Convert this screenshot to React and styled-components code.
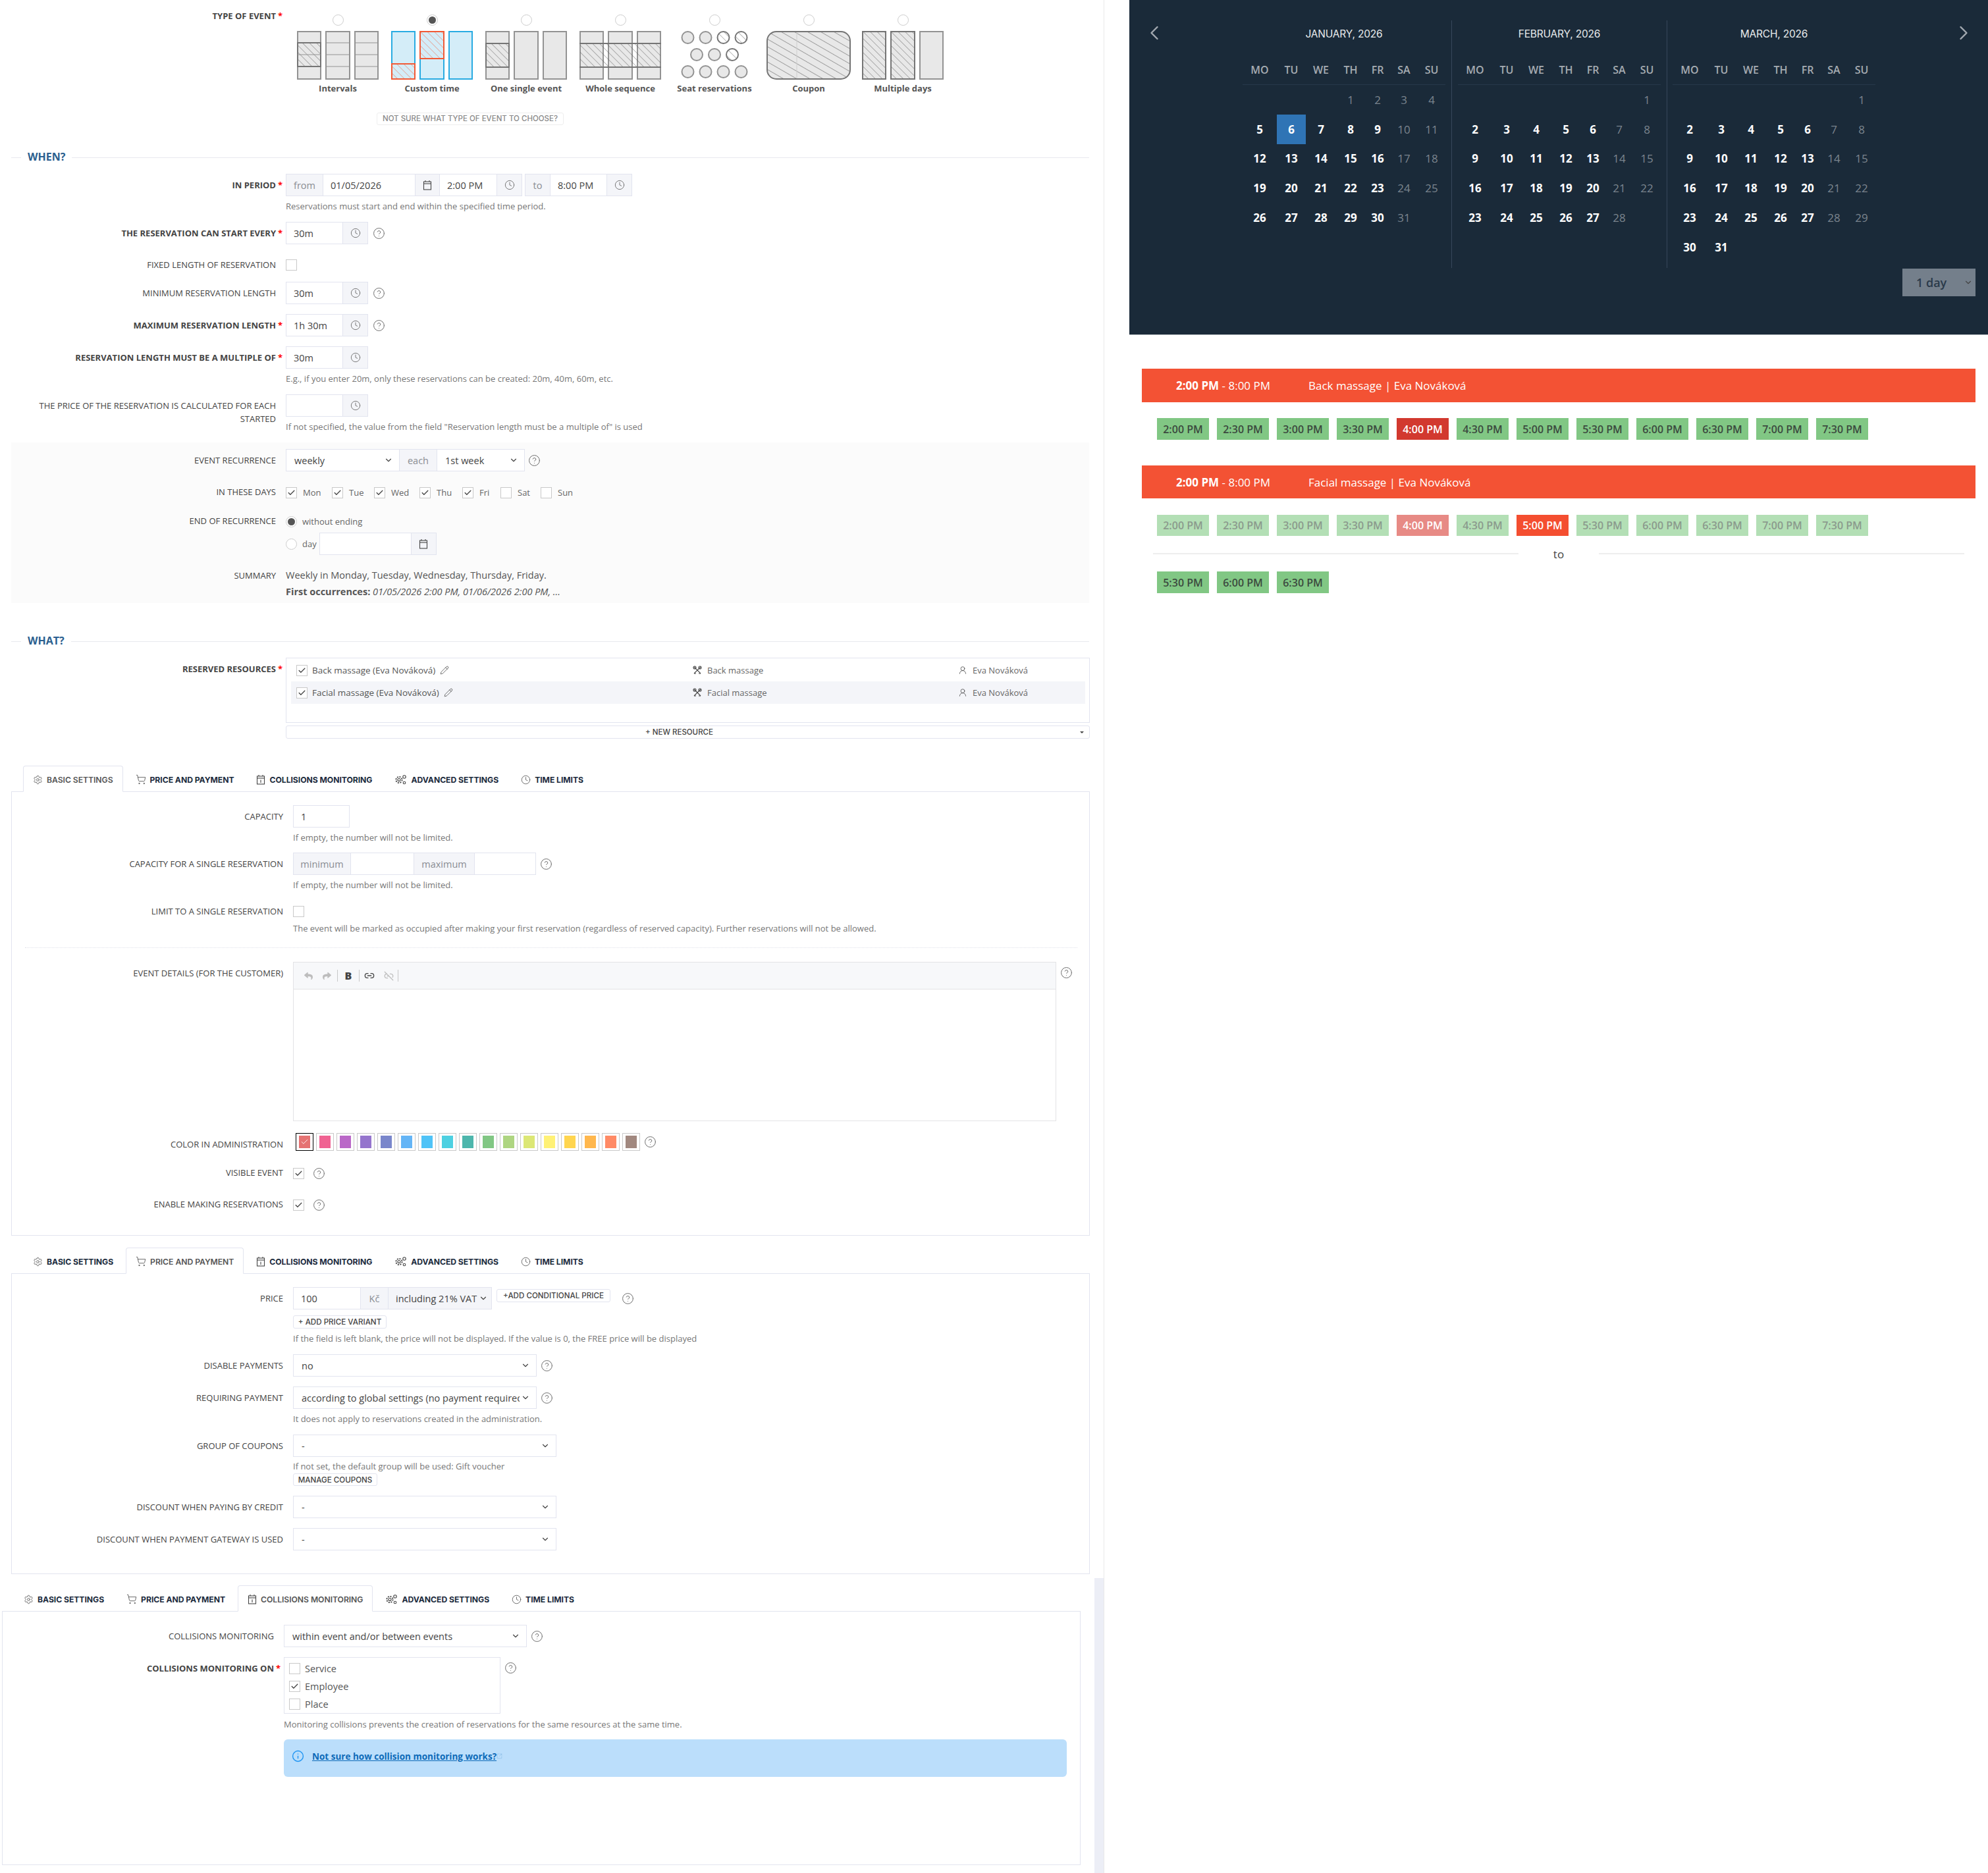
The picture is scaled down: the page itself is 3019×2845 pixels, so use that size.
import React from "react"
import styled, { createGlobalStyle } from "styled-components"
import { Check, ChevronDown, ChevronLeft, ChevronRight, CircleHelp, Clock, Info, Link2, Link2Off, Pencil, Settings, ShoppingCart, SquareArrowOutUpRight, UserRound } from "lucide-react"
import { FaReply, FaShare } from "react-icons/fa"

const Global = createGlobalStyle`
    html, body { margin: 0; padding: 0; background: #fff; }
    body { font-family: "Open Sans", "Liberation Sans", sans-serif; color: #444; }
    * { box-sizing: border-box; }
`

const Page = styled.div`
    display: flex;
    width: 3019px;
    height: 2845px;
    overflow: hidden;
`
const LeftPane = styled.div`
    position: relative;
    width: 1677px;
    flex: none;
    border-right: 1px solid #e9e9e9;
`
const ScrollStrip = styled.div`
    position: absolute;
    right: 0;
    top: 2397px;
    bottom: 0;
    width: 14px;
    background: #eceef6;
`
const RightPane = styled.div`
    flex: 1;
    margin-left: 38px;
    display: flex;
    flex-direction: column;
`

/* ---- event type picker ---- */
const TypeTop = styled.div`
    display: flex;
    padding-top: 22px;
`
const TypeLabel = styled.div`
    width: 419px;
    flex: none;
    margin-top: -8px;
    line-height: 20px;
    font-size: 13px;
    font-weight: 700;
    text-align: right;
    text-transform: uppercase;
`
const TypeStar = styled.div`
    width: 22.5px;
    flex: none;
    margin-top: -8px;
    padding-left: 3px;
    color: #f00;
    font-size: 13px;
    font-weight: 700;
    line-height: 20px;
`
const TypeGrid = styled.div`
    display: flex;
`
const TypeItem = styled.div`
    width: 143px;
    display: flex;
    flex-direction: column;
    align-items: center;
`
const TypeName = styled.div`
    margin-top: 5px;
    font-size: 13px;
    line-height: 16px;
    font-weight: 700;
    color: #555;
`
const NotSure = styled.div`
    width: 284px;
    height: 19px;
    margin: 29px 0 0 572px;
    border: 1px solid #eee;
    border-radius: 3px;
    font-family: "Inter", sans-serif;
    font-size: 11.5px;
    font-weight: 500;
    line-height: 17px;
    text-align: center;
    color: #8a8a8a;
    white-space: nowrap;
`

/* ---- form parts ---- */
const SectionTitle = styled.div`
    display: flex;
    align-items: center;
    height: 20px;
    margin: ${p => p.$mt}px 22px 16px 17px;
    font-size: 16px;
    font-weight: 700;
    line-height: 18px;
    color: #2b5f8f;
    &::before { content: ""; width: 15px; height: 1px; margin-top: 2px; background: #e8e9ee; margin-right: 10px; }
    &::after { content: ""; flex: 1; height: 1px; margin-top: 2px; background: #e8e9ee; margin-left: 10px; }
`
const Row = styled.div`
    display: flex;
    align-items: flex-start;
    margin-top: ${p => p.$mt || 0}px;
`
const Label = styled.div`
    width: ${p => p.$w || 419}px;
    flex: none;
    padding-top: ${p => (p.$pad !== undefined ? p.$pad : p.$tick ? 0 : 7)}px;
    margin-top: ${p => (p.$tick ? -2 : 0)}px;
    margin-bottom: ${p => (p.$tick ? -1 : 0)}px;
    font-size: 13px;
    line-height: 20px;
    font-weight: ${p => (p.$req ? 700 : 400)};
    text-align: right;
    text-transform: uppercase;
    white-space: nowrap;
`
const Star = styled.div`
    width: 15px;
    flex: none;
    padding: ${p => (p.$on ? "7px 0 0 3px" : "0")};
    color: #f00;
    font-size: 13px;
    font-weight: 700;
    line-height: 20px;
`
const Controls = styled.div`
    flex: 1;
    min-width: 0;
`
const Inline = styled.div`
    display: flex;
    align-items: ${p => p.$align || "center"};
    gap: ${p => p.$gap || 0}px;
    margin-top: ${p => p.$mt || 0}px;
`
const Group = styled.div`
    display: inline-flex;
    height: 34px;
    margin-left: ${p => p.$ml || 0}px;
    border: 1px solid #e2e4ef;
    vertical-align: top;
`
const Field = styled.div`
    width: ${p => p.$w}px;
    display: flex;
    align-items: center;
    padding-left: 11px;
    font-size: 14.5px;
    color: #444;
    background: #fff;
`
const Addon = styled.div`
    width: ${p => p.$w}px;
    display: flex;
    align-items: center;
    justify-content: center;
    flex: none;
    font-size: 14.5px;
    color: #8a8d93;
    background: #f4f5f9;
    border-left: ${p => (p.$first ? "none" : "1px solid #e2e4ef")};
    border-right: ${p => (p.$first || p.$both ? "1px solid #e2e4ef" : "none")};
`
const SelectBox = styled.div`
    width: ${p => p.$w}px;
    flex: none;
    display: flex;
    align-items: center;
    justify-content: space-between;
    padding: 0 ${p => (p.$tight ? 5 : 9)}px 0 ${p => (p.$tight ? 11 : 12)}px;
    font-size: 14.5px;
    color: #444;
    white-space: nowrap;
    background: ${p => p.$muted ? "#f4f5f9" : "#fff"};
    border-left: ${p => (p.$edge ? "1px solid #e2e4ef" : "none")};
    span { overflow: hidden; white-space: nowrap; }
    svg { flex: none; margin-left: 2px; }
`
const Help = styled.div`
    margin-top: ${p => (p.$mt === undefined ? 5 : p.$mt)}px;
    font-size: 13px;
    line-height: 20px;
    color: #777;
    white-space: nowrap;
`
const HelpMark = styled(CircleHelp)`
    flex: none;
    margin-left: ${p => p.$ml || 7}px;
    margin-top: ${p => p.$top || 0}px;
    color: #666;
`
const Box = styled.span`
    width: 17px;
    height: 17px;
    flex: none;
    display: flex;
    align-items: center;
    justify-content: center;
    background: #fff;
    border: 1px solid #c9c9c9;
    color: #444;
`
const RadioBox = styled.span`
    width: 17px;
    height: 17px;
    flex: none;
    display: flex;
    align-items: center;
    justify-content: center;
    margin-bottom: ${p => p.$mb || 0}px;
    background: #fff;
    border: 1px solid #cdcdcd;
    border-radius: 50%;
    &::after {
        content: "";
        display: ${p => (p.$on ? "block" : "none")};
        width: 11px;
        height: 11px;
        border-radius: 50%;
        background: #555;
    }
`
const DayChoice = styled.div`
    width: ${p => p.$w}px;
    display: flex;
    align-items: center;
    font-size: 13px;
    color: #666;
    span:last-child { margin-left: 9px; }
`
const RadioText = styled.span`
    margin-left: 8px;
    font-size: 13px;
    color: #666;
`
const Shaded = styled.div`
    margin: 14px 22px 0 17px;
    padding: 10px 0 5px;
    background: #fbfbfb;
`
const Summary = styled.div`
    font-size: 14.5px;
    line-height: 25px;
    font-weight: 400;
    color: #555;
    b { font-weight: 700; }
    i { font-style: italic; }
`

/* ---- resources ---- */
const ResourceBox = styled.div`
    width: 1221px;
    height: 99px;
    padding: 1px 6px 0 7px;
    border: 1px solid #e2e4ef;
`
const ResourceRow = styled.div`
    display: grid;
    grid-template-columns: 602px 403px 1fr;
    align-items: center;
    height: 34px;
    padding-left: 8px;
    font-size: 13.5px;
    color: #555;
    background: ${p => (p.$hl ? "#f4f5f9" : "transparent")};
`
const ResourceName = styled.div`
    display: flex;
    align-items: center;
    gap: 7px;
    svg:last-child { color: #444; }
`
const ResourceMeta = styled.div`
    display: flex;
    align-items: center;
    gap: 8px;
    font-size: 13px;
    color: #666;
    svg { color: #444; }
`
const NewResource = styled.div`
    position: relative;
    width: 1221px;
    height: 20px;
    margin-top: 4px;
    padding-right: 26px;
    border: 1px solid #e2e4ef;
    border-radius: 3px;
    font-family: "Inter", sans-serif;
    font-size: 11.5px;
    font-weight: 500;
    line-height: 18px;
    text-align: center;
    color: #444;
`
const NewCaret = styled.span`
    position: absolute;
    right: 8px;
    top: 8px;
    width: 0;
    height: 0;
    border-left: 3px solid transparent;
    border-right: 3px solid transparent;
    border-top: 3px solid #444;
`

/* ---- tabs ---- */
const TabBlock = styled.div`
    width: 1638px;
    margin: ${p => p.$mt}px 0 0 ${p => p.$left}px;
`
const TabBar = styled.div`
    display: flex;
    gap: 4px;
    height: 40px;
    padding-left: 18px;
    margin-bottom: -1px;
`
const Tab = styled.div`
    position: relative;
    z-index: 1;
    display: flex;
    align-items: center;
    gap: 6px;
    height: 40px;
    padding: 2px 14px 0;
    font-family: "Inter", sans-serif;
    font-size: 12.2px;
    font-weight: ${p => (p.$on ? 600 : 700)};
    letter-spacing: -0.05px;
    text-transform: uppercase;
    white-space: nowrap;
    color: ${p => (p.$on ? "#555" : "#1c2b3d")};
    background: ${p => (p.$on ? "#fff" : "transparent")};
    border: 1px solid ${p => (p.$on ? "#e2e4ef" : "transparent")};
    border-bottom-color: ${p => (p.$on ? "#fff" : "transparent")};
    border-radius: 4px 4px 0 0;
    svg { flex: none; color: #444; }
`
const TabPanel = styled.div`
    height: ${p => p.$h}px;
    padding-top: 20px;
    border: 1px solid #e2e4ef;
`
const DottedLine = styled.div`
    margin: 19px 18px 21px 20px;
    border-top: 1px dotted #e0e2ea;
`
const Editor = styled.div`
    width: 1159px;
    height: 242px;
    border: 1px solid #e3e3e6;
`
const EditorBar = styled.div`
    display: flex;
    align-items: center;
    height: 41px;
    padding-left: 8px;
    background: #f7f8fa;
    border-bottom: 1px solid #e3e3e6;
`
const ToolBtn = styled.div`
    width: ${p => p.$w || 28}px;
    display: flex;
    align-items: center;
    justify-content: center;
    font-size: 16px;
    font-weight: 800;
    color: ${p => (p.$off ? "#bdbdbd" : "#444")};
`
const ToolSep = styled.div`
    width: 1px;
    height: 18px;
    margin-left: ${p => p.$gap || 0}px;
    background: #c8c8c8;
`
const Swatches = styled.div`
    display: flex;
    gap: 4px;
    margin-left: 4px;
`
const Swatch = styled.div`
    width: 27px;
    height: 27px;
    padding: 3px 4px;
    display: flex;
    align-items: center;
    justify-content: center;
    background: #fff;
    border: ${p => (p.$on ? "1px solid #000" : "1px solid #c9c9c9")};
    div {
        width: 100%;
        height: 100%;
        display: flex;
        align-items: center;
        justify-content: center;
        color: #fff;
        background: ${p => p.$color};
    }
`
const SmallBtn = styled.div`
    display: ${p => (p.$block ? "flex" : "inline-flex")};
    align-items: center;
    justify-content: center;
    width: ${p => p.$w}px;
    height: ${p => p.$h || 20}px;
    margin-top: ${p => p.$mt || 0}px;
    margin-left: ${p => p.$ml || 0}px;
    border: 1px solid #e2e4ef;
    border-radius: 3px;
    font-family: "Inter", sans-serif;
    font-size: 11.6px;
    font-weight: 500;
    color: #444;
    white-space: nowrap;
`
const TickList = styled.div`
    width: 329px;
    height: 86px;
    padding: 8px 7px;
    border: 1px solid #e2e4ef;
`
const TickLine = styled.div`
    display: flex;
    align-items: center;
    height: 17px;
    margin-bottom: 10px;
    font-size: 14.5px;
    color: #555;
    span:last-child { margin-left: 7px; }
`
const Notice = styled.div`
    display: flex;
    align-items: center;
    width: 1189px;
    height: 57px;
    margin-top: 13px;
    padding: 0 0 6px 12px;
    background: #bbdefb;
    border-radius: 6px;
    svg:first-child { color: #2196f3; }
`
const NoticeLink = styled.a`
    margin-left: 12px;
    font-size: 13.5px;
    font-weight: 700;
    color: #0d6ab8;
    text-decoration: underline;
`

/* ---- calendar ---- */
const Calendar = styled.div`
    display: flex;
    height: 509px;
    padding-top: 31px;
    background: #1a2a39;
    border-bottom: 1px solid #c4c8cc;
`
const NavLeft = styled.div`
    width: 172px;
    flex: none;
    padding: 1px 0 0 20px;
    color: #a3a9b0;
`
const NavRight = styled.div`
    flex: 1;
    height: 419px;
    display: flex;
    flex-direction: column;
    justify-content: space-between;
    align-items: flex-end;
    padding: 1px 19px 0 0;
    color: #a3a9b0;
`
const Month = styled.div`
    width: 308px;
    flex: none;
`
const MonthName = styled.div`
    height: 42px;
    margin-bottom: 11px;
    font-family: "Inter", sans-serif;
    font-size: 15.5px;
    font-weight: 400;
    line-height: 42px;
    letter-spacing: -0.2px;
    text-align: center;
    color: #e8eaec;
`
const Weekdays = styled.div`
    display: grid;
    grid-template-columns: 52px 44px 46px 44px 38px 42px 42px;
    height: 45px;
    align-items: center;
    border-bottom: 1px solid #26384a;
    font-size: 16px;
    font-weight: 600;
    color: #a5abb1;
    text-align: center;
`
const Days = styled.div`
    display: grid;
    grid-template-columns: 52px 44px 46px 44px 38px 42px 42px;
    grid-auto-rows: 44.75px;
`
const Day = styled.div`
    display: flex;
    align-items: center;
    justify-content: center;
    font-size: 17px;
    font-weight: ${p => (p.$open ? 700 : 400)};
    color: ${p => (p.$open ? "#fff" : "#7a848e")};
    background: ${p => (p.$sel ? "#2f74b5" : "transparent")};
`
const MonthSep = styled.div`
    width: 1px;
    height: 376px;
    flex: none;
    margin: 0 ${p => p.$r}px 0 ${p => p.$l}px;
    background: #37475a;
`
const DaySelect = styled.div`
    width: 111px;
    height: 42px;
    display: flex;
    align-items: center;
    justify-content: space-between;
    padding: 0 4px 0 21px;
    font-size: 18px;
    font-weight: 600;
    color: #2a3a4a;
    background: #747f8b;
    svg { color: #2a3a4a; }
`

/* ---- time slots ---- */
const SlotArea = styled.div`
    margin: 0 19px;
`
const Bar = styled.div`
    display: flex;
    align-items: center;
    height: ${p => p.$h}px;
    margin-top: ${p => p.$mt}px;
    padding-left: 52px;
    background: #f35234;
    color: #fff;
    font-size: 17px;
    b { font-weight: 700; }
`
const BarTime = styled.div`
    width: 201px;
`
const SlotRow = styled.div`
    display: flex;
    gap: 12px;
    margin-top: ${p => p.$mt}px;
    padding-left: 23px;
`
const slotColors = {
    free: ["#81c784", "#3c4a3f"],
    busy: ["#d2392f", "#fff"],
    picked: ["#f44e30", "#fff"],
    faded: ["#b3dfb5", "#8b9a8d"],
    fadedBusy: ["#e78a85", "#fff"],
}
const Slot = styled.div`
    width: 79px;
    height: ${p => p.$h || 33}px;
    display: flex;
    align-items: center;
    justify-content: center;
    font-size: 16px;
    font-weight: 600;
    white-space: nowrap;
    background: ${p => slotColors[p.$kind][0]};
    color: ${p => slotColors[p.$kind][1]};
`
const ToSep = styled.div`
    display: flex;
    align-items: center;
    height: 20px;
    margin: 17px 17px 0;
    font-size: 17px;
    color: #444;
    &::before, &::after { content: ""; flex: 1; height: 2px; background: #eeeeee; }
    span { width: 122px; text-align: center; }
`

/* ---- drawings ---- */
function Hatches(){
    return (
        <defs>
            <pattern id="hatchGray" width="7.5" height="7.5" patternUnits="userSpaceOnUse" patternTransform="rotate(-45)">
                <line x1="0" y1="0" x2="0" y2="7.5" stroke="#555" strokeWidth="0.8" />
            </pattern>
            <pattern id="hatchWide" width="10" height="10" patternUnits="userSpaceOnUse" patternTransform="rotate(-60)">
                <line x1="0" y1="0" x2="0" y2="10" stroke="#555" strokeWidth="1" />
            </pattern>
            <pattern id="hatchRed" width="7.5" height="7.5" patternUnits="userSpaceOnUse" patternTransform="rotate(-45)">
                <line x1="0" y1="0" x2="0" y2="7.5" stroke="#f15a36" strokeWidth="0.8" />
            </pattern>
        </defs>
    )
}

const cols = [[1, 35], [44, 36], [88, 35]]

function Column({ x, w, fill = "#e8e8e8", stroke = "#939393" }){
    return <rect x={x} y="1" width={w} height="72" fill={fill} stroke={stroke} strokeWidth="2" />
}
function Patch({ x, w, y, h, red }){
    return (
        <g>
            <rect x={x} y={y} width={w} height={h} fill={red ? "#d4edf8" : "#e8e8e8"} />
            <rect x={x} y={y} width={w} height={h} fill={`url(#${red ? "hatchRed" : "hatchGray"})`} stroke={red ? "#f15a36" : "#757575"} strokeWidth="2" />
        </g>
    )
}
function Ticks({ x, w }){
    return [18, 36, 54].map(y => <line key={y} x1={x} x2={x + w} y1={y} y2={y} stroke="#939393" />)
}

function TypeIcon({ kind }){
    const width = kind === "coupon" ? 130 : 124
    return (
        <svg width={width} height="74" viewBox={`0 0 ${width} 74`}>
            <Hatches />
            {kind === "intervals" && <>
                {cols.map(([x, w]) => <Column key={x} x={x} w={w} />)}
                <Ticks x={44} w={36} /><Ticks x={88} w={35} />
                <Patch x={1} w={35} y={18} h={36} />
                <line x1="1" x2="36" y1="36" y2="36" stroke="#939393" />
            </>}
            {kind === "custom" && <>
                {cols.map(([x, w]) => <Column key={x} x={x} w={w} fill="#d4edf8" stroke="#29abe2" />)}
                <Patch x={1} w={35} y={50} h={23} red />
                <Patch x={44} w={36} y={1} h={41} red />
            </>}
            {kind === "single" && <>
                {cols.map(([x, w]) => <Column key={x} x={x} w={w} />)}
                <Patch x={1} w={35} y={19} h={36} />
            </>}
            {kind === "sequence" && <>
                {cols.map(([x, w]) => <Column key={x} x={x} w={w} />)}
                <rect x="1" y="19" width="122" height="36" fill="url(#hatchGray)" />
                <path d="M0 19 H124 M0 55 H124" stroke="#757575" strokeWidth="2" />
            </>}
            {kind === "seats" && <>
                {[[21.5, 10], [48.5, 10], [35, 36], [62, 36], [21.5, 62], [48.5, 62], [75.5, 62], [102.5, 62]].map(([x, y]) => (
                    <circle key={`${x}-${y}`} cx={x} cy={y} r="9" fill="#e8e8e8" stroke="#939393" strokeWidth="2" />
                ))}
                {[[75.5, 10], [102.5, 10], [89, 36]].map(([x, y]) => (
                    <circle key={`${x}-${y}`} cx={x} cy={y} r="9" fill="url(#hatchGray)" stroke="#757575" strokeWidth="2" />
                ))}
            </>}
            {kind === "coupon" && <>
                <rect x="2" y="1" width="126" height="72" rx="14" fill="#e8e8e8" />
                <rect x="2" y="1" width="126" height="72" rx="14" fill="url(#hatchWide)" stroke="#757575" strokeWidth="2" />
                <line x1="47" x2="47" y1="2" y2="72" stroke="#cfcfcf" />
            </>}
            {kind === "multi" && <>
                <Column x={88} w={35} />
                <Patch x={1} w={35} y={1} h={72} />
                <Patch x={44} w={36} y={1} h={72} />
            </>}
        </svg>
    )
}

function CalendarIcon({ number }){
    return (
        <svg width="14" height="16" viewBox="0 0 14 16" fill="none" stroke="#444" strokeWidth="1.1">
            <rect x="1.5" y="3" width="11" height="12" />
            <line x1="1.5" x2="12.5" y1="6" y2="6" />
            <line x1="4" x2="4" y1="1" y2="3" />
            <line x1="10" x2="10" y1="1" y2="3" />
            {number && <line x1="7" x2="7" y1="8.5" y2="13" />}
        </svg>
    )
}

function GearsIcon(){
    return (
        <svg width="19" height="16" viewBox="0 0 19 16" fill="none" stroke="#444" strokeWidth="1.1">
            <circle cx="7" cy="8.5" r="2" />
            <circle cx="7" cy="8.5" r="4.6" strokeDasharray="2 1.6" strokeWidth="1.8" />
            <circle cx="15" cy="4" r="2.2" />
            <circle cx="15" cy="13" r="1.8" />
        </svg>
    )
}

function ServiceIcon(){
    return (
        <svg width="14" height="14" viewBox="0 0 14 14" fill="none" stroke="#444" strokeWidth="1.1">
            <path d="M2 2 L12 12 M12 2 L2 12" />
            <circle cx="3" cy="3" r="2" />
            <circle cx="11" cy="3" r="2" />
            <path d="M2 12 L5 12 M9 12 L12 12" />
        </svg>
    )
}

/* ---- small helpers ---- */
const q = (ml, size = 19) => <HelpMark size={size} strokeWidth={1.2} $ml={ml} />
const ClockAddon = () => <Addon $w={38}><Clock size={16} strokeWidth={1.3} color="#666" /></Addon>
const CalAddon = ({ both }) => <Addon $w={38} $both={both}><CalendarIcon /></Addon>
const Tick = ({ on }) => <Box>{on && <Check size={13} strokeWidth={2.4} />}</Box>
const Caret = ({ size = 14 }) => <ChevronDown size={size} strokeWidth={2} color="#444" />

function FormRow({ label, req, w, tick, mt, children }){
    return (
        <Row $mt={mt}>
            <Label $w={w} $req={req} $tick={tick}>{label}</Label>
            <Star $on={req}>{req ? "*" : ""}</Star>
            <Controls>{children}</Controls>
        </Row>
    )
}

function TimeField({ value, mt, label, req, help, q: withQ }){
    return (
        <FormRow label={label} req={req} mt={mt}>
            <Inline>
                <Group><Field $w={85}>{value}</Field><ClockAddon /></Group>
                {withQ && q(7)}
            </Inline>
            {help && <Help>{help}</Help>}
        </FormRow>
    )
}

const tabList = [
    ["Basic settings", <Settings size={15} strokeWidth={1.2} />],
    ["Price and payment", <ShoppingCart size={16} strokeWidth={1.2} />],
    ["Collisions monitoring", <CalendarIcon number />],
    ["Advanced settings", <GearsIcon />],
    ["Time limits", <Clock size={15} strokeWidth={1.2} />],
]

function Tabs({ active }){
    return (
        <TabBar>
            {tabList.map(([name, icon], i) => <Tab key={name} $on={i === active}>{icon}{name}</Tab>)}
        </TabBar>
    )
}

const eventTypes = [
    ["intervals", "Intervals"],
    ["custom", "Custom time"],
    ["single", "One single event"],
    ["sequence", "Whole sequence"],
    ["seats", "Seat reservations"],
    ["coupon", "Coupon"],
    ["multi", "Multiple days"],
]
const dayChoices = [["Mon", 70, true], ["Tue", 64, true], ["Wed", 69, true], ["Thu", 65, true], ["Fri", 58, true], ["Sat", 61, false], ["Sun", 60, false]]
const swatchColors = ["#e57373", "#f06292", "#ba68c8", "#9575cd", "#7986cb", "#64b5f6", "#4fc3f7", "#4dd0e1", "#4db6ac", "#81c784", "#aed581", "#dce775", "#fff176", "#ffd54f", "#ffb74d", "#ff8a65", "#a1887f"]
const months = [
    { name: "January, 2026", offset: 3, days: 31, from: 5, sel: 6 },
    { name: "February, 2026", offset: 6, days: 28, from: 2 },
    { name: "March, 2026", offset: 6, days: 31, from: 2 },
]
const weekNames = ["MO", "TU", "WE", "TH", "FR", "SA", "SU"]
const slotTimes = ["2:00 PM", "2:30 PM", "3:00 PM", "3:30 PM", "4:00 PM", "4:30 PM", "5:00 PM", "5:30 PM", "6:00 PM", "6:30 PM", "7:00 PM", "7:30 PM"]

function MonthView({ month }){
    const cells = []
    for(let i = 0; i < month.offset; i++) cells.push(<div key={`e${i}`} />)
    for(let d = 1; d <= month.days; d++){
        const col = (d + month.offset - 1) % 7
        cells.push(<Day key={d} $open={col < 5 && d >= month.from} $sel={d === month.sel}>{d}</Day>)
    }
    return (
        <Month>
            <MonthName>{month.name.toUpperCase()}</MonthName>
            <Weekdays>{weekNames.map(n => <div key={n}>{n}</div>)}</Weekdays>
            <Days>{cells}</Days>
        </Month>
    )
}

export default function App(){
    return (
        <Page>
            <Global />
            <LeftPane>
                <ScrollStrip />

                <TypeTop>
                    <TypeLabel>Type of event</TypeLabel>
                    <TypeStar>*</TypeStar>
                    <TypeGrid>
                        {eventTypes.map(([kind, name]) => (
                            <TypeItem key={kind}>
                                <RadioBox $on={kind === "custom"} $mb={8} />
                                <TypeIcon kind={kind} />
                                <TypeName>{name}</TypeName>
                            </TypeItem>
                        ))}
                    </TypeGrid>
                </TypeTop>
                <NotSure>NOT SURE WHAT TYPE OF EVENT TO CHOOSE?</NotSure>

                <SectionTitle $mt={38}>WHEN?</SectionTitle>

                <FormRow label="In period" req mt={1}>
                    <Inline $gap={4}>
                        <Group>
                            <Addon $w={56} $first>from</Addon>
                            <Field $w={139}>01/05/2026</Field>
                            <CalAddon both />
                            <Field $w={86}>2:00 PM</Field>
                            <ClockAddon />
                        </Group>
                        <Group>
                            <Addon $w={38} $first>to</Addon>
                            <Field $w={85}>8:00 PM</Field>
                            <ClockAddon />
                        </Group>
                    </Inline>
                    <Help>Reservations must start and end within the specified time period.</Help>
                </FormRow>
                <TimeField label="The reservation can start every" req value="30m" mt={14} q />
                <FormRow label="Fixed length of reservation" tick mt={23}><Tick /></FormRow>
                <TimeField label="Minimum reservation length" value="30m" mt={17} q />
                <TimeField label="Maximum reservation length" req value="1h 30m" mt={15} q />
                <TimeField label="Reservation length must be a multiple of" req value="30m" mt={15}
                    help="E.g., if you enter 20m, only these reservations can be created: 20m, 40m, 60m, etc." />
                <TimeField label={<>The price of the reservation is calculated for each<br />started</>} value="" mt={14}
                    help={'If not specified, the value from the field "Reservation length must be a multiple of" is used'} />

                <Shaded>
                    <FormRow label="Event recurrence" w={402}>
                        <Inline>
                            <Group>
                                <SelectBox $w={171}>weekly<Caret /></SelectBox>
                                <Addon $w={58} $both>each</Addon>
                                <SelectBox $w={132}>1st week<Caret /></SelectBox>
                            </Group>
                            {q(5)}
                        </Inline>
                    </FormRow>
                    <FormRow label="In these days" w={402} tick mt={23}>
                        <Inline>
                            {dayChoices.map(([name, width, on]) => (
                                <DayChoice key={name} $w={width}><Tick on={on} /><span>{name}</span></DayChoice>
                            ))}
                        </Inline>
                    </FormRow>
                    <FormRow label="End of recurrence" w={402} tick mt={26}>
                        <Inline><RadioBox $on /><RadioText>without ending</RadioText></Inline>
                        <Inline $mt={8}>
                            <RadioBox /><RadioText>day</RadioText>
                            <Group $ml={4}><Field $w={138} /><CalAddon /></Group>
                        </Inline>
                    </FormRow>
                    <Row $mt={18}>
                        <Label $w={402} $pad={3}>Summary</Label>
                        <Star />
                        <Summary>
                            Weekly in Monday, Tuesday, Wednesday, Thursday, Friday.<br />
                            <b>First occurrences:</b> <i>01/05/2026 2:00 PM, 01/06/2026 2:00 PM, ...</i>
                        </Summary>
                    </Row>
                </Shaded>

                <SectionTitle $mt={47}>WHAT?</SectionTitle>

                <FormRow label="Reserved resources" req>
                    <ResourceBox>
                        {[["Back massage", false], ["Facial massage", true]].map(([name, hl]) => (
                            <ResourceRow key={name} $hl={hl}>
                                <ResourceName><Tick on /><span>{name} (Eva Nováková)</span><Pencil size={14} strokeWidth={1.3} /></ResourceName>
                                <ResourceMeta><ServiceIcon />{name}</ResourceMeta>
                                <ResourceMeta><UserRound size={14} strokeWidth={1.3} />Eva Nováková</ResourceMeta>
                            </ResourceRow>
                        ))}
                    </ResourceBox>
                    <NewResource>+ NEW RESOURCE<NewCaret /></NewResource>
                </FormRow>

                <TabBlock $mt={41} $left={17}>
                    <Tabs active={0} />
                    <TabPanel $h={675}>
                        <FormRow label="Capacity" w={412}>
                            <Group><Field $w={84}>1</Field></Group>
                            <Help>If empty, the number will not be limited.</Help>
                        </FormRow>
                        <FormRow label="Capacity for a single reservation" w={412} mt={13}>
                            <Inline>
                                <Group>
                                    <Addon $w={87} $first>minimum</Addon>
                                    <Field $w={95} />
                                    <Addon $w={93} $both>maximum</Addon>
                                    <Field $w={92} />
                                </Group>
                                {q(6)}
                            </Inline>
                            <Help>If empty, the number will not be limited.</Help>
                        </FormRow>
                        <FormRow label="Limit to a single reservation" w={412} tick mt={22}>
                            <Tick />
                            <Help $mt={7}>The event will be marked as occupied after making your first reservation (regardless of reserved capacity). Further reservations will not be allowed.</Help>
                        </FormRow>
                        <DottedLine />
                        <FormRow label="Event details (for the customer)" w={412}>
                            <Inline $align="flex-start">
                                <Editor>
                                    <EditorBar>
                                        <ToolBtn $off><FaReply size={13} /></ToolBtn>
                                        <ToolBtn $off><FaShare size={13} /></ToolBtn>
                                        <ToolSep $gap={2} />
                                        <ToolBtn $w={32}>B</ToolBtn>
                                        <ToolSep />
                                        <ToolBtn $w={30}><Link2 size={16} /></ToolBtn>
                                        <ToolBtn $off><Link2Off size={15} /></ToolBtn>
                                        <ToolSep />
                                    </EditorBar>
                                </Editor>
                                <HelpMark size={19} strokeWidth={1.2} $ml={6} $top={7} />
                            </Inline>
                        </FormRow>
                        <FormRow label="Color in administration" w={412} mt={18}>
                            <Inline>
                                <Swatches>
                                    {swatchColors.map((c, i) => (
                                        <Swatch key={c} $color={c} $on={i === 0}><div>{i === 0 && <Check size={13} strokeWidth={1.6} />}</div></Swatch>
                                    ))}
                                </Swatches>
                                {q(6)}
                            </Inline>
                        </FormRow>
                        <FormRow label="Visible event" w={412} tick mt={25}>
                            <Inline><Tick on />{q(13)}</Inline>
                        </FormRow>
                        <FormRow label="Enable making reservations" w={412} tick mt={29}>
                            <Inline><Tick on />{q(13)}</Inline>
                        </FormRow>
                    </TabPanel>
                </TabBlock>

                <TabBlock $mt={18} $left={17}>
                    <Tabs active={1} />
                    <TabPanel $h={457}>
                        <FormRow label="Price" w={412}>
                            <Inline>
                                <Group>
                                    <Field $w={101}>100</Field>
                                    <Addon $w={42}>Kč</Addon>
                                    <SelectBox $w={157} $muted $edge $tight>including 21% VAT<Caret /></SelectBox>
                                </Group>
                                <SmallBtn $w={173} $ml={7} $mt={-8}>+ADD CONDITIONAL PRICE</SmallBtn>
                                {q(17)}
                            </Inline>
                            <SmallBtn $w={142} $mt={9} $block>+ ADD PRICE VARIANT</SmallBtn>
                            <Help>If the field is left blank, the price will not be displayed. If the value is 0, the FREE price will be displayed</Help>
                        </FormRow>
                        <FormRow label="Disable payments" w={412} mt={14}>
                            <Inline><Group><SelectBox $w={368}>no<Caret /></SelectBox></Group>{q(6)}</Inline>
                        </FormRow>
                        <FormRow label="Requiring payment" w={412} mt={15}>
                            <Inline><Group><SelectBox $w={368}><span>according to global settings (no payment required)</span><Caret /></SelectBox></Group>{q(6)}</Inline>
                            <Help>It does not apply to reservations created in the administration.</Help>
                        </FormRow>
                        <FormRow label="Group of coupons" w={412} mt={14}>
                            <Group><SelectBox $w={398}>-<Caret /></SelectBox></Group>
                            <Help $mt={4}>If not set, the default group will be used: Gift voucher</Help>
                            <SmallBtn $w={128} $h={19} $mt={1} $block>MANAGE COUPONS</SmallBtn>
                        </FormRow>
                        <FormRow label="Discount when paying by credit" w={412} mt={15}>
                            <Group><SelectBox $w={398}>-<Caret /></SelectBox></Group>
                        </FormRow>
                        <FormRow label="Discount when payment gateway is used" w={412} mt={15}>
                            <Group><SelectBox $w={398}>-<Caret /></SelectBox></Group>
                        </FormRow>
                    </TabPanel>
                </TabBlock>

                <TabBlock $mt={17} $left={3}>
                    <Tabs active={2} />
                    <TabPanel $h={386}>
                        <FormRow label="Collisions monitoring" w={412}>
                            <Inline><Group><SelectBox $w={367}>within event and/or between events<Caret /></SelectBox></Group>{q(6)}</Inline>
                        </FormRow>
                        <FormRow label="Collisions monitoring on" req w={412} mt={15}>
                            <Inline $align="flex-start">
                                <TickList>
                                    <TickLine><Tick /><span>Service</span></TickLine>
                                    <TickLine><Tick on /><span>Employee</span></TickLine>
                                    <TickLine><Tick /><span>Place</span></TickLine>
                                </TickList>
                                <HelpMark size={19} strokeWidth={1.2} $ml={6} $top={7} />
                            </Inline>
                            <Help $mt={6}>Monitoring collisions prevents the creation of reservations for the same resources at the same time.</Help>
                            <Notice>
                                <Info size={19} strokeWidth={1.8} />
                                <NoticeLink>Not sure how collision monitoring works?</NoticeLink>
                                <SquareArrowOutUpRight size={9} strokeWidth={1} color="#6aa5d8" />
                            </Notice>
                        </FormRow>
                    </TabPanel>
                </TabBlock>
            </LeftPane>

            <RightPane>
                <Calendar>
                    <NavLeft><ChevronLeft size={36} strokeWidth={1.6} /></NavLeft>
                    <MonthView month={months[0]} />
                    <MonthSep $l={9} $r={9} />
                    <MonthView month={months[1]} />
                    <MonthSep $l={9} $r={8} />
                    <MonthView month={months[2]} />
                    <NavRight>
                        <ChevronRight size={36} strokeWidth={1.6} />
                        <DaySelect>1 day<Caret /></DaySelect>
                    </NavRight>
                </Calendar>

                <SlotArea>
                    <Bar $h={51} $mt={51}><BarTime><b>2:00 PM</b> - 8:00 PM</BarTime>Back massage | Eva Nováková</Bar>
                    <SlotRow $mt={24}>
                        {slotTimes.map(t => <Slot key={t} $kind={t === "4:00 PM" ? "busy" : "free"}>{t}</Slot>)}
                    </SlotRow>
                    <Bar $h={50} $mt={39}><BarTime><b>2:00 PM</b> - 8:00 PM</BarTime>Facial massage | Eva Nováková</Bar>
                    <SlotRow $mt={25}>
                        {slotTimes.map(t => (
                            <Slot key={t} $h={32} $kind={t === "4:00 PM" ? "fadedBusy" : t === "5:00 PM" ? "picked" : "faded"}>{t}</Slot>
                        ))}
                    </SlotRow>
                    <ToSep><span>to</span></ToSep>
                    <SlotRow $mt={17}>
                        {["5:30 PM", "6:00 PM", "6:30 PM"].map(t => <Slot key={t} $kind="free">{t}</Slot>)}
                    </SlotRow>
                </SlotArea>
            </RightPane>
        </Page>
    )
}
